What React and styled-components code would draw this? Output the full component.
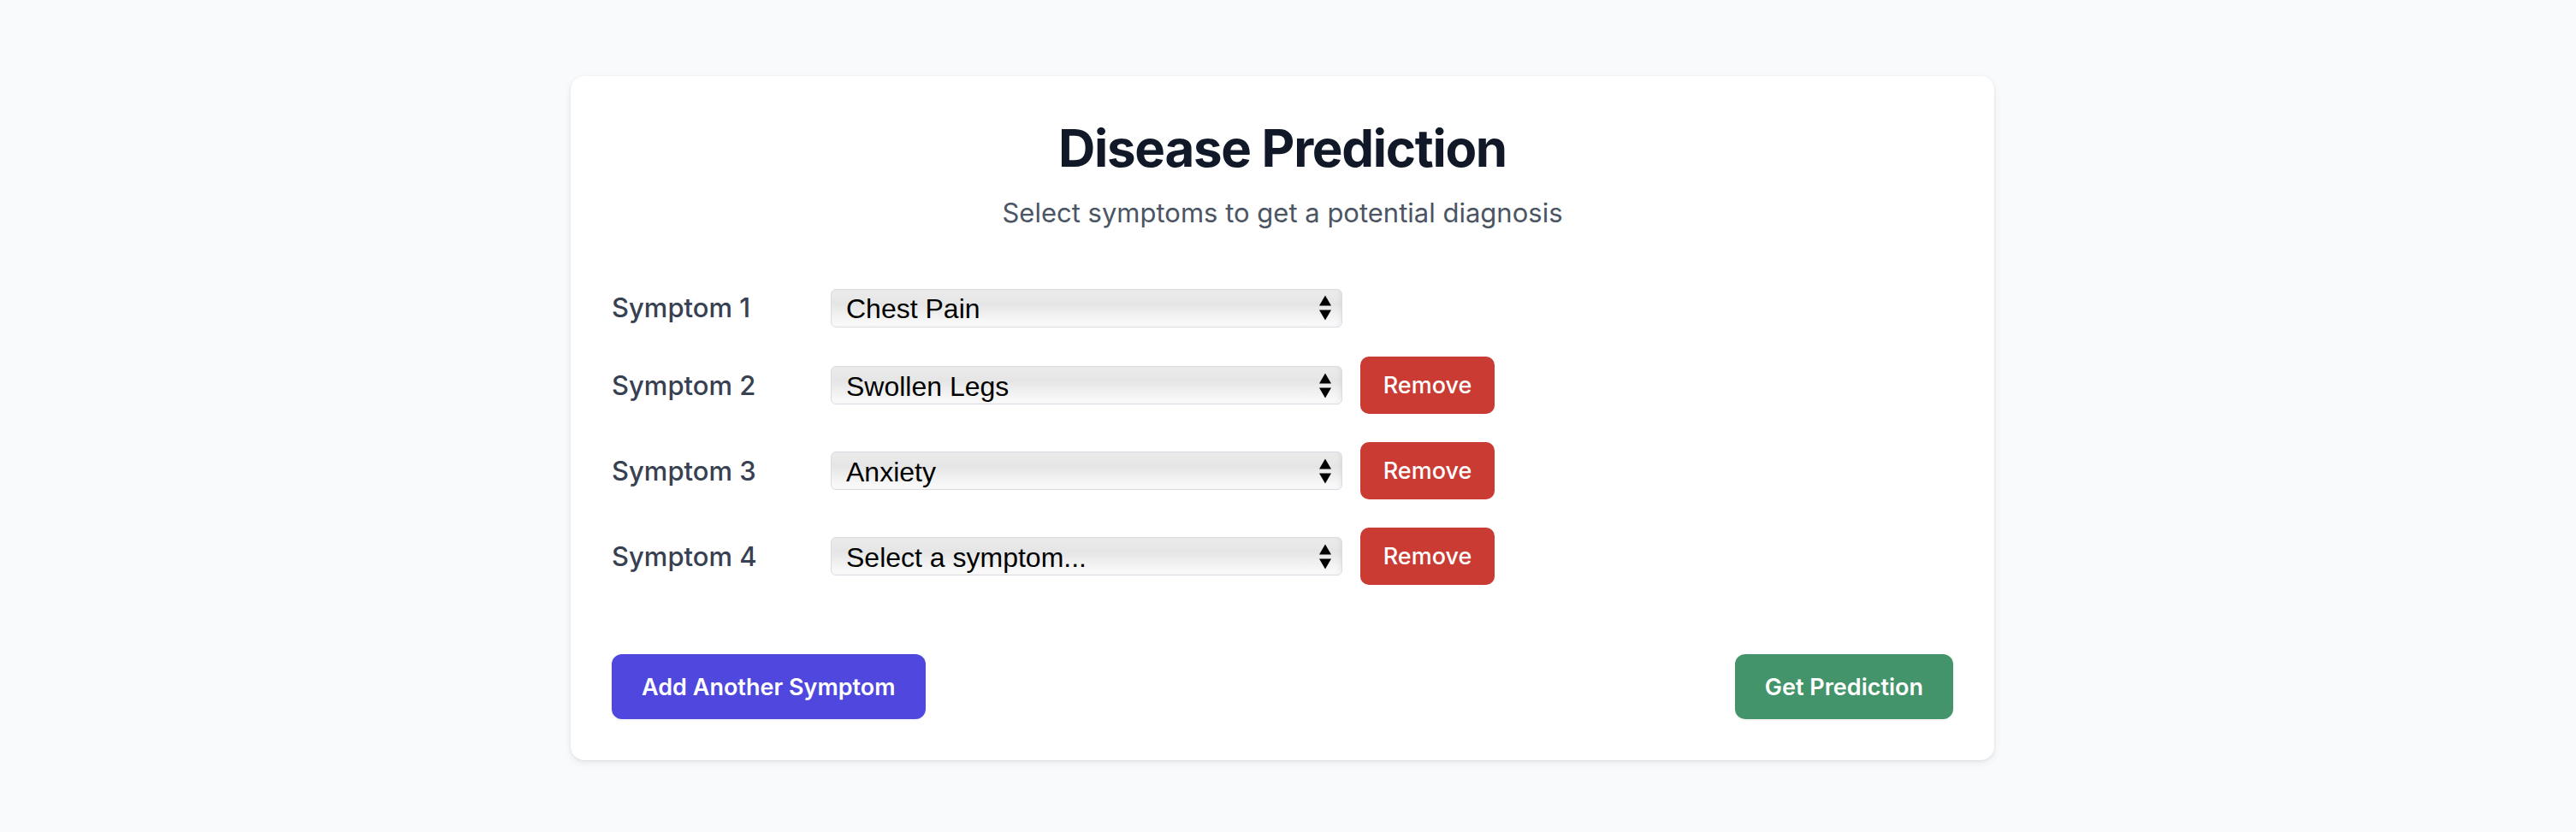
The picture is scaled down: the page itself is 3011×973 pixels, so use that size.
import React, { useState } from "react";
import styled, { createGlobalStyle } from "styled-components";

const GlobalStyle = createGlobalStyle`
  body {
    margin: 0;
    background-color: #f9fafb;
    font-family: Inter, "Noto Sans", sans-serif;
  }
`;

const Page = styled.div`
  min-height: 100vh;
  box-sizing: border-box;
  display: flex;
  justify-content: center;
  align-items: flex-start;
  padding: 89px 13px 40px 0;
`;

const Card = styled.div`
  width: 1664px;
  box-sizing: border-box;
  background-color: #ffffff;
  border-radius: 16px;
  padding: 48px;
  box-shadow: 0 3px 8px rgba(15, 23, 42, 0.08), 0 1px 3px rgba(15, 23, 42, 0.06);
`;

const Title = styled.h1`
  margin: 0;
  text-align: center;
  font-size: 60px;
  line-height: 72px;
  font-weight: 700;
  letter-spacing: -1.3px;
  color: #111827;
`;

const Subtitle = styled.p`
  margin: 16px 0 0;
  text-align: center;
  font-size: 31px;
  line-height: 48px;
  color: #4b5563;
`;

const SymptomList = styled.div`
  display: flex;
  flex-direction: column;
  gap: 33px;
  margin-top: 63px;
`;

const Row = styled.div`
  display: flex;
  align-items: center;
`;

const Label = styled.label`
  width: 256px;
  flex-shrink: 0;
  font-size: 31px;
  line-height: 48px;
  font-weight: 500;
  color: #374151;
`;

const SelectWrap = styled.div`
  position: relative;
  width: 598px;
  flex-shrink: 0;
`;

const Select = styled.select`
  appearance: none;
  -webkit-appearance: none;
  width: 100%;
  height: 45px;
  box-sizing: border-box;
  margin: 0;
  padding: 2px 40px 0 17px;
  border: 1px solid #d8dde4;
  border-radius: 6px;
  background: linear-gradient(
    to bottom,
    #ececec 0%,
    #e5e5e5 38%,
    #f2f2f2 72%,
    #fbfbfb 100%
  );
  box-shadow: inset -3px 0 4px rgba(0, 0, 0, 0.04);
  font-family: "Liberation Sans", Arial, sans-serif;
  font-size: 32px;
  color: #000000;
  outline: none;
`;

const Arrows = styled.svg`
  position: absolute;
  right: 13px;
  top: 50%;
  transform: translateY(-50%);
  pointer-events: none;
`;

const RemoveButton = styled.button`
  margin-left: 21px;
  width: 157px;
  height: 67px;
  border: none;
  border-radius: 10px;
  background-color: #c93b33;
  color: #ffffff;
  font-family: Inter, sans-serif;
  font-size: 27px;
  font-weight: 500;
  cursor: pointer;
`;

const Actions = styled.div`
  display: flex;
  justify-content: space-between;
  margin-top: 81px;
`;

const ActionButton = styled.button`
  height: 76px;
  padding: 0 35px;
  border: none;
  border-radius: 12px;
  background-color: ${props => (props.$variant === "green" ? "#43946b" : "#4f47de")};
  color: #ffffff;
  font-family: Inter, sans-serif;
  font-size: 27px;
  font-weight: 600;
  box-shadow: 0 1px 3px rgba(0, 0, 0, 0.08);
  cursor: pointer;
`;

const OPTIONS = [
  "Select a symptom...",
  "Chest Pain",
  "Swollen Legs",
  "Anxiety",
  "Fatigue",
  "Headache",
  "Fever",
];

const SelectArrows = () => (
  <Arrows width="14" height="29" viewBox="0 0 14 29">
    <polygon points="7,0 14,12 0,12" fill="#000" />
    <polygon points="0,17 14,17 7,29" fill="#000" />
  </Arrows>
);

const App = () => {
  const [symptoms, setSymptoms] = useState([
    "Chest Pain",
    "Swollen Legs",
    "Anxiety",
    "Select a symptom...",
  ]);

  const update = (i, value) =>
    setSymptoms(symptoms.map((s, idx) => (idx === i ? value : s)));

  const remove = i => setSymptoms(symptoms.filter((_, idx) => idx !== i));

  return (
    <Page>
      <GlobalStyle />
      <Card>
        <Title>Disease Prediction</Title>
        <Subtitle>Select symptoms to get a potential diagnosis</Subtitle>
        <SymptomList>
          {symptoms.map((symptom, i) => (
            <Row key={i}>
              <Label>Symptom {i + 1}</Label>
              <SelectWrap>
                <Select value={symptom} onChange={e => update(i, e.target.value)}>
                  {OPTIONS.map(o => (
                    <option key={o} value={o}>
                      {o}
                    </option>
                  ))}
                </Select>
                <SelectArrows />
              </SelectWrap>
              {i > 0 && <RemoveButton onClick={() => remove(i)}>Remove</RemoveButton>}
            </Row>
          ))}
        </SymptomList>
        <Actions>
          <ActionButton
            $variant="indigo"
            onClick={() => setSymptoms([...symptoms, "Select a symptom..."])}
          >
            Add Another Symptom
          </ActionButton>
          <ActionButton $variant="green">Get Prediction</ActionButton>
        </Actions>
      </Card>
    </Page>
  );
};

export default App;
